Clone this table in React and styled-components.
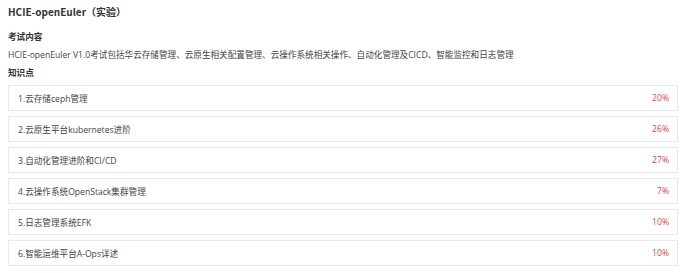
import React from "react";
import styled, { createGlobalStyle } from "styled-components";

const Global = createGlobalStyle`
  html, body { margin: 0; padding: 0; background: #fff; }
  body { font-family: "Segoe UI", "Open Sans", "Noto Sans CJK SC", sans-serif; color: #333; }
`;

const Page = styled.div`
  padding: 5px 14px 0 8px;
  display: flex;
  flex-direction: column;
`;

const Title = styled.h1`
  margin: 0;
  font-family: "Noto Sans CJK SC", sans-serif;
  font-size: 10px;
  font-weight: 700;
  line-height: 14px;
  color: #333;
`;

const Label = styled.h2`
  margin: ${(p) => p.$top}px 0 0;
  font-size: 8.6px;
  font-weight: 700;
  line-height: 13px;
  color: #333;
`;

const Desc = styled.p`
  margin: 5px 0 0;
  font-size: 8.6px;
  line-height: 13px;
  color: #444;
`;

const List = styled.ul`
  list-style: none;
  margin: 5px 0 0;
  padding: 0;
  display: flex;
  flex-direction: column;
  gap: 5px;
`;

const Item = styled.li`
  height: 26px;
  box-sizing: border-box;
  border: 1px solid #e8e8e8;
  background: #fff;
  display: flex;
  align-items: center;
  justify-content: space-between;
  padding: 0 8px 0 9px;
  font-size: 8.6px;
  color: #444;
`;

const Pct = styled.span`
  color: #e0434b;
`;

const items = [
  ["1.云存储ceph管理", "20%"],
  ["2.云原生平台kubernetes进阶", "26%"],
  ["3.自动化管理进阶和CI/CD", "27%"],
  ["4.云操作系统OpenStack集群管理", "7%"],
  ["5.日志管理系统EFK", "10%"],
  ["6.智能运维平台A-Ops详述", "10%"],
];

export default function App() {
  return (
    <Page>
      <Global />
      <Title>HCIE-openEuler（实验）</Title>
      <Label $top={12}>考试内容</Label>
      <Desc>HCIE-openEuler V1.0考试包括华云存储管理、云原生相关配置管理、云操作系统相关操作、自动化管理及CICD、智能监控和日志管理</Desc>
      <Label $top={5}>知识点</Label>
      <List>
        {items.map(([name, pct]) => (
          <Item key={name}>
            <span>{name}</span>
            <Pct>{pct}</Pct>
          </Item>
        ))}
      </List>
    </Page>
  );
}
